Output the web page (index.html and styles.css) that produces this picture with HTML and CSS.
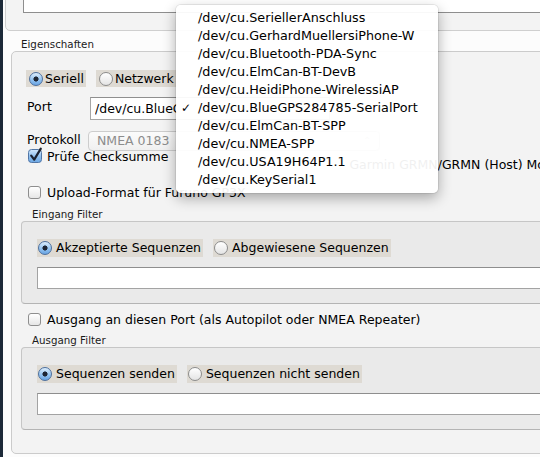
FILE: index.html
```html
<!DOCTYPE html>
<html>
<head>
<meta charset="utf-8">
<link rel="stylesheet" href="styles.css">
</head>
<body>
<div class="window">
  <div class="topbox"><div class="topfield"></div></div>
  <div class="caption cap-main">Eigenschaften</div>
  <div class="group main">
    <div class="radios top-radios">
      <div class="radio on"><span class="rb"></span>Seriell</div>
      <div class="radio"><span class="rb"></span>Netzwerk</div>
    </div>
    <div class="row port-row">
      <span class="lbl port-lbl">Port</span>
      <div class="combo"><span class="combo-text">/dev/cu.BlueGPS284785-SerialPort</span></div>
    </div>
    <div class="row proto-row">
      <span class="lbl proto-lbl">Protokoll</span>
      <div class="popup">NMEA 0183<span class="stepper">⌃</span></div>
    </div>
    <div class="row check-row first-check">
      <svg class="cb-on" width="16" height="17" viewBox="0 0 16 17">
        <defs><linearGradient id="cbg" x1="0" y1="0" x2="0" y2="1"><stop offset="0" stop-color="#d4e8fb"/><stop offset="0.5" stop-color="#93c2ef"/><stop offset="1" stop-color="#6ba6e3"/></linearGradient></defs>
        <rect x="0.5" y="2.5" width="13" height="13" rx="3" fill="url(#cbg)" stroke="#5176a6"/>
        <path d="M3.2 8.6 L6.2 12.6 L12.8 1.6" fill="none" stroke="#1c2230" stroke-width="2.2" stroke-linecap="round" stroke-linejoin="round"/>
      </svg>
      <span class="ctext">Prüfe Checksumme</span>
      <span class="garmin">Garmin GRMN/GRMN (Host) Modus</span>
    </div>
    <div class="row check-row upload-row">
      <span class="cb"></span><span class="ctext">Upload-Format für Furuno GP3X</span>
    </div>
    <div class="caption small-cap in-cap">Eingang Filter</div>
    <div class="group filter">
      <div class="radios">
        <div class="radio f on"><span class="rb"></span>Akzeptierte Sequenzen</div>
        <div class="radio f"><span class="rb"></span>Abgewiesene Sequenzen</div>
      </div>
      <div class="field"></div>
    </div>
    <div class="row check-row out-row">
      <span class="cb"></span><span class="ctext">Ausgang an diesen Port (als Autopilot oder NMEA Repeater)</span>
    </div>
    <div class="caption small-cap out-cap">Ausgang Filter</div>
    <div class="group filter">
      <div class="radios">
        <div class="radio f on"><span class="rb"></span>Sequenzen senden</div>
        <div class="radio f"><span class="rb"></span>Sequenzen nicht senden</div>
      </div>
      <div class="field"></div>
    </div>
  </div>
</div>
<div class="menu">
  <div class="item"><span class="mark"></span>/dev/cu.SeriellerAnschluss</div>
  <div class="item"><span class="mark"></span>/dev/cu.GerhardMuellersiPhone-W</div>
  <div class="item"><span class="mark"></span>/dev/cu.Bluetooth-PDA-Sync</div>
  <div class="item"><span class="mark"></span>/dev/cu.ElmCan-BT-DevB</div>
  <div class="item"><span class="mark"></span>/dev/cu.HeidiPhone-WirelessiAP</div>
  <div class="item"><span class="mark">✓</span>/dev/cu.BlueGPS284785-SerialPort</div>
  <div class="item"><span class="mark"></span>/dev/cu.ElmCan-BT-SPP</div>
  <div class="item"><span class="mark"></span>/dev/cu.NMEA-SPP</div>
  <div class="item"><span class="mark"></span>/dev/cu.USA19H64P1.1</div>
  <div class="item"><span class="mark"></span>/dev/cu.KeySerial1</div>
</div>
</body>
</html>
```
FILE: styles.css
```css
html, body {
  margin: 0;
  padding: 0;
}
body {
  width: 540px;
  height: 457px;
  overflow: hidden;
  position: relative;
  background: #fcfcfc;
  font-family: "DejaVu Sans", sans-serif;
  font-size: 12.5px;
  color: #000;
}
.window {
  height: 457px;
  box-sizing: border-box;
  border-left: 3px solid #1c2938;
  padding-left: 2px;
  display: flex;
  flex-direction: column;
  align-items: flex-start;
}
.topbox {
  margin-top: -10px;
  width: 700px;
  height: 41px;
  box-sizing: border-box;
  border: 1px solid #cfcfcf;
  border-radius: 5px;
  background: #f3f3f3;
  padding-left: 17px;
  flex-shrink: 0;
}
.topfield {
  height: 22px;
  box-sizing: border-box;
  background: #fff;
  border: 1px solid #8e8e8e;
  border-top: none;
}
.caption {
  font-size: 10.3px;
  line-height: 12px;
  color: #1a1a1a;
  white-space: nowrap;
}
.cap-main {
  margin: 7px 0 0 16px;
  height: 12px;
}
.group {
  box-sizing: border-box;
  border-radius: 5px;
  flex-shrink: 0;
}
.main {
  margin: 1px 0 0 6px;
  width: 700px;
  height: 403px;
  border: 1px solid #cbcbcb;
  background: #f3f3f3;
  display: flex;
  flex-direction: column;
  align-items: flex-start;
}
.radios {
  display: flex;
  height: 18px;
  gap: 10px;
}
.top-radios {
  margin: 18px 0 0 14px;
  height: 17px;
}
.radio {
  display: flex;
  align-items: center;
  gap: 2px;
  padding: 0 2px 0 3px;
  background: #dedad3;
  white-space: nowrap;
  line-height: 17px;
}
.radio.f {
  padding: 0 2px 0 1px;
  gap: 4px;
  line-height: 18px;
}
.rb {
  width: 14px;
  height: 14px;
  box-sizing: border-box;
  border-radius: 50%;
  border: 1px solid #8c8c8c;
  background: linear-gradient(#ffffff, #e4e4e4);
  flex-shrink: 0;
}
.radio.on .rb {
  border-color: #4d6f9d;
  background: radial-gradient(circle, #1d2533 0, #1d2533 2.2px, transparent 2.9px),
              linear-gradient(#dcedfc, #94c3f0 55%, #6aa5e4);
}
.row {
  display: flex;
  align-items: center;
  white-space: nowrap;
}
.lbl {
  font-size: 12.5px;
}
.port-row {
  margin: 10px 0 0 15px;
  height: 23px;
}
.port-lbl {
  width: 63px;
  margin-top: -5px;
}
.combo {
  width: 240px;
  height: 23px;
  box-sizing: border-box;
  background: #fff;
  border: 1px solid #a6a6a6;
  border-top-color: #8f8f8f;
  padding-left: 4px;
  line-height: 21px;
  overflow: hidden;
}
.combo-text {
  display: block;
  width: 82px;
  overflow: hidden;
}
.proto-row {
  margin: 11px 0 0 15px;
  height: 20px;
}
.proto-lbl {
  width: 61px;
  margin-top: -4px;
}
.popup {
  width: 292px;
  height: 20px;
  box-sizing: border-box;
  border: 1px solid #cdcdcd;
  border-radius: 4px;
  background: linear-gradient(#fbfbfb, #f0f0f0);
  color: #8c8c8c;
  padding-left: 8px;
  line-height: 18px;
  display: flex;
  justify-content: space-between;
}
.stepper {
  width: 16px;
  color: #b5b5b5;
  font-size: 10px;
}
.check-row {
  height: 15px;
  padding-left: 16px;
}
.first-check {
  margin-top: -2px;
  align-items: flex-start;
}
.cb-on {
  margin-top: -2px;
  margin-right: 3px;
  flex-shrink: 0;
}
.garmin {
  margin: 8px 0 0 181px;
  line-height: 15px;
}
.cb {
  width: 13px;
  height: 13px;
  box-sizing: border-box;
  border: 1px solid #8e8e8e;
  border-radius: 3px;
  background: linear-gradient(#ffffff, #e6e6e6);
  margin-right: 6px;
  flex-shrink: 0;
}
.ctext {
  line-height: 15px;
}
.upload-row {
  margin-top: 21px;
}
.small-cap {
  height: 12px;
}
.in-cap {
  margin: 8px 0 0 20px;
}
.filter {
  margin: 1px 0 0 9px;
  width: 680px;
  height: 83px;
  border: 1px solid #c6c6c6;
  border-bottom-color: #b4b4b4;
  border-radius: 4px;
  background: #eaeaea;
  padding: 17px 0 0 15px;
  display: flex;
  flex-direction: column;
  align-items: flex-start;
}
.field {
  margin-top: 10px;
  width: 640px;
  height: 22px;
  box-sizing: border-box;
  background: #fff;
  border: 1px solid #a3a3a3;
  border-top-color: #8e8e8e;
}
.out-row {
  margin-top: 8px;
  height: 14px;
}
.out-cap {
  margin: 8px 0 0 20px;
}
.menu {
  position: absolute;
  left: 176px;
  top: 5px;
  width: 262px;
  height: 188px;
  box-sizing: border-box;
  padding: 4px 0;
  background: rgba(255, 255, 255, 0.94);
  border-radius: 5px;
  box-shadow: 0 0 0 1px rgba(0, 0, 0, 0.07), 0 5px 14px rgba(0, 0, 0, 0.32);
  font-size: 12.75px;
}
.item {
  height: 18px;
  line-height: 18px;
  padding-left: 5px;
  display: flex;
  white-space: nowrap;
}
.mark {
  width: 17px;
  font-size: 12px;
}
```
